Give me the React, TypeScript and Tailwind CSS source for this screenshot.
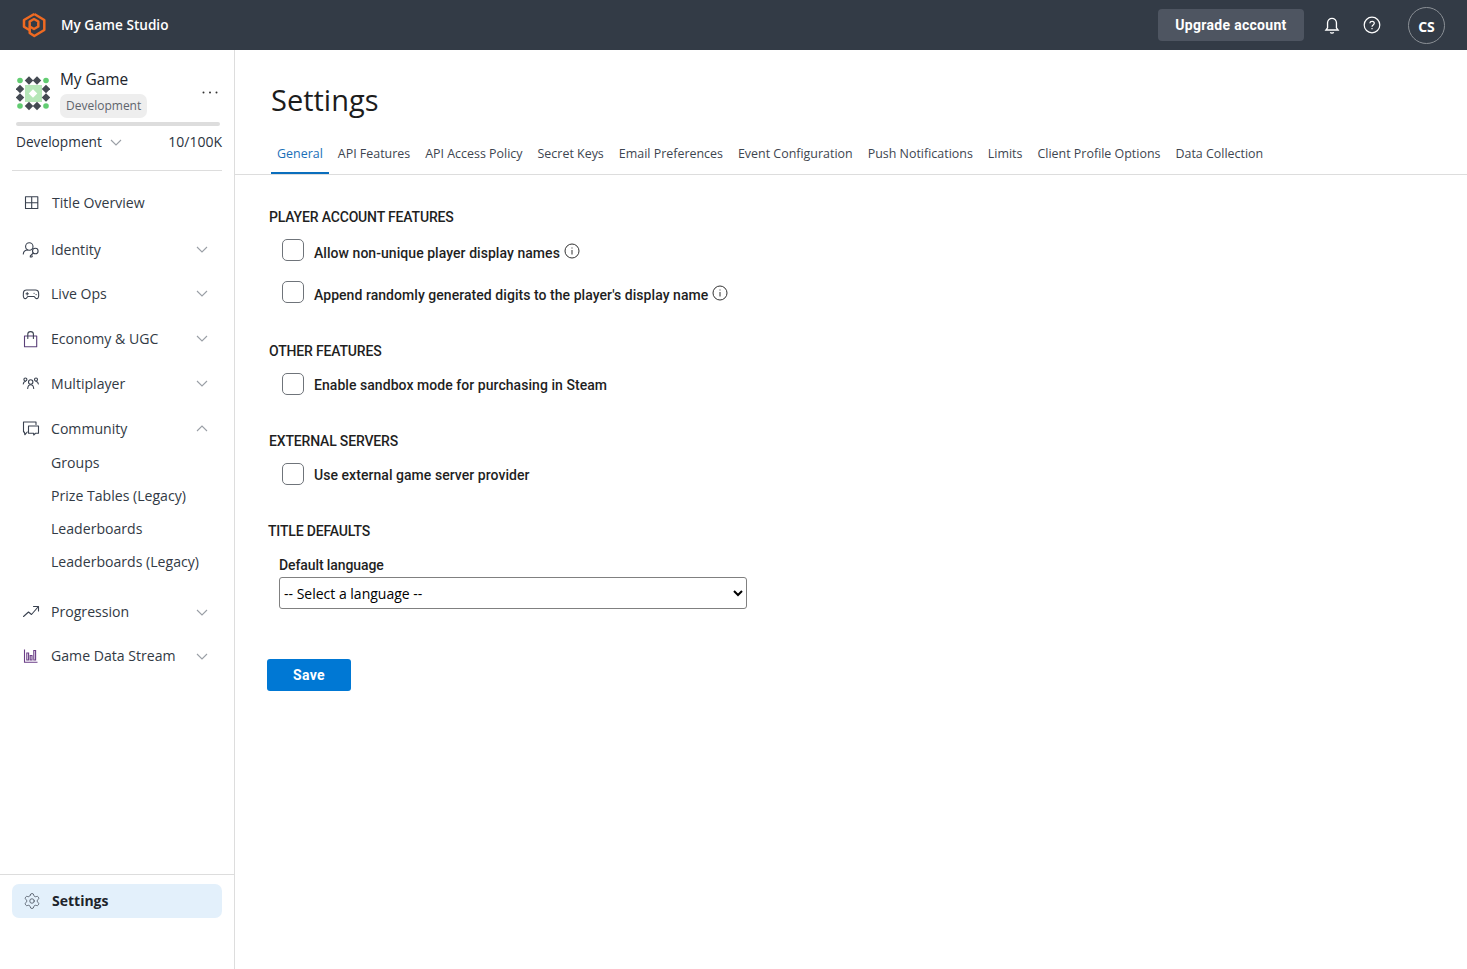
import React from "react";
import { Settings as Gear } from "lucide-react";

const sans = "font-['Open_Sans','Noto_Sans',sans-serif]";
const din = "font-['Roboto','Liberation_Sans',sans-serif]";

function Chevron({ up = false, className = "" }: { up?: boolean; className?: string }) {
  return (
    <svg width="12" height="7" viewBox="0 0 12 7" fill="none" stroke="#9a9fa6" strokeWidth="1.1" className={className}>
      <path d={up ? "M1 6l5-5 5 5" : "M1 1l5 5 5-5"} />
    </svg>
  );
}

function Ic({ children, w = 18 }: { children: React.ReactNode; w?: number }) {
  return (
    <svg width={w} height={w} viewBox="0 0 18 18" fill="none" stroke="#3a4250" strokeWidth="1.1" strokeLinecap="round" strokeLinejoin="round">
      {children}
    </svg>
  );
}

const icons: Record<string, React.ReactNode> = {
  title: (
    <Ic>
      <path d="M3.500 2.800h12.300v11.700H3.500zM9.700 2.800v11.700M3.500 8.700h12.300" />
    </Ic>
  ),
  identity: (
    <Ic>
      <circle cx="7.300" cy="5.500" r="3.700" />
      <path d="M1.300 13c.2-2.500 1.800-3.900 4.400-4" />
      <circle cx="13.300" cy="10" r="2.800" />
      <path d="M11.300 12l-3 3v1h1.500l.6-1" />
    </Ic>
  ),
  live: (
    <Ic>
      <path d="M4.500 5h9c1.800 0 2.900 1.100 3.100 2.800.2 1.800.1 3.900-.4 5-.5 1-1.800 1.100-2.600.3l-1.400-1.600H5.800l-1.400 1.600c-.8.8-2.100.7-2.600-.3-.5-1.100-.6-3.200-.4-5C1.600 6.100 2.700 5 4.500 5z" />
      <path d="M4 8.800h2.400M5.200 7.600V10M12 8.200h.2M14 9.600h.2" />
    </Ic>
  ),
  economy: (
    <Ic>
      <path d="M2.500 6h12.200v10.700H2.500z" stroke="#5a3f78" />
      <path d="M5.800 8.500V4c0-1.500 1-2.400 2.800-2.400s2.800.9 2.800 2.400v4.500" />
    </Ic>
  ),
  multi: (
    <Ic>
      <circle cx="8.700" cy="7" r="2.200" />
      <path d="M5.700 13.500c.2-2.300 1.200-3.800 3-3.800s2.800 1.500 3 3.800" />
      <circle cx="3.400" cy="4.500" r="1.500" />
      <circle cx="14" cy="4.500" r="1.500" />
      <path d="M1.300 9c.2-1.500.8-2.500 2.100-2.500M16.300 9c-.2-1.500-.8-2.500-2.300-2.500" />
    </Ic>
  ),
  community: (
    <Ic>
      <path d="M14 4.500V2H1.500v10H2.500l.3 2.800 2.400-2.800" />
      <path d="M6.500 6h10v7.200h-2.800l-2 1.800v-1.800H6.500z" />
    </Ic>
  ),
  progression: (
    <Ic>
      <path d="M1.500 13.500l5-4.500 3 2.500 6.500-7.500" />
      <path d="M11.500 3.500h5V8" />
    </Ic>
  ),
  data: (
    <svg width="18" height="18" viewBox="0 0 18 18" fill="none" stroke="#6a3d86" strokeWidth="1.100">
      <path d="M2.500 2.500v12.800h13" />
      <path d="M4.800 6h1.800v7h-1.800zM8.200 8.500h1.800v4.500H8.200zM11.800 3.500h1.800v9.500h-1.800z" />
    </svg>
  ),
};

function NavRow({ icon, label, h, up, extra = "" }: { icon: string; label: string; h: string; up?: boolean; extra?: string }) {
  return (
    <div className={`flex items-center pl-[22px] pr-[27px] ${h} ${extra}`}>
      <span className="flex w-[29px] shrink-0">{icons[icon]}</span>
      <span className="flex-1 text-[14.1px] text-[#323a45]">{label}</span>
      <Chevron up={up} className="translate-x-[1px]" />
    </div>
  );
}

function Sub({ children }: { children: React.ReactNode }) {
  return <div className="flex h-[33px] items-center pl-[51px] text-[14.1px] text-[#323a45]">{children}</div>;
}

function GameLogo() {
  const dark = "#444a52";
  const green = "#62cd72";
  const diamond = (x: number, y: number, k: string) => (
    <rect key={k} x={x - 3} y={y - 3} width="6" height="6" fill={dark} transform={`rotate(45 ${x} ${y})`} />
  );
  const xs = [4, 13, 21, 30];
  return (
    <svg width="34" height="36" viewBox="0 0 34 36">
      <rect x="9" y="9" width="17" height="17" fill="#b6e7b8" />
      <rect x="14" y="14.500" width="6" height="6" fill="#fff" transform="rotate(45 17 17.500)" />
      <circle cx={xs[0]} cy="4.500" r="2.800" fill={green} />
      <circle cx={xs[3]} cy="4.500" r="2.800" fill={green} />
      <circle cx={xs[0]} cy="30" r="2.800" fill={green} />
      <circle cx={xs[3]} cy="30" r="2.800" fill={green} />
      {diamond(13, 4.500, "a")}
      {diamond(21, 4.500, "b")}
      {diamond(13, 30, "c")}
      {diamond(21, 30, "d")}
      {diamond(4, 13, "e")}
      {diamond(4, 21.500, "f")}
      {diamond(30, 13, "g")}
      {diamond(30, 21.500, "h")}
    </svg>
  );
}

function Info() {
  return (
    <svg width="16" height="16" viewBox="0 0 16 16" fill="none" stroke="#333" strokeWidth="1" className="ml-1 mt-[2px]">
      <circle cx="8" cy="8" r="7" />
      <path d="M8 7v4.500M8 4.500v1" />
    </svg>
  );
}

function Check({ label, info }: { label: string; info?: boolean }) {
  return (
    <div className="flex h-[22px] items-center pl-[13px]">
      <span className="h-[22px] w-[22px] shrink-0 rounded-[5px] border border-[#6f747a] bg-white" />
      <span className={`ml-[10px] text-[14px] font-medium leading-[16px] tracking-[0.05px] text-[#1f1f1f] ${din} ${info ? "mt-[6px]" : "mt-[2px]"}`}>{label}</span>
      {info && <Info />}
    </div>
  );
}

function Heading({ children, extra }: { children: React.ReactNode; extra: string }) {
  return <h2 className={`text-[14px] font-medium leading-[20px] tracking-[-0.17px] text-[#1f1f1f] ${din} ${extra}`}>{children}</h2>;
}

const tabs = [
  "General",
  "API Features",
  "API Access Policy",
  "Secret Keys",
  "Email Preferences",
  "Event Configuration",
  "Push Notifications",
  "Limits",
  "Client Profile Options",
  "Data Collection",
];

export default function App() {
  return (
    <div className={`flex h-[969px] w-[1467px] flex-col overflow-hidden bg-white ${sans}`}>
      <header className="flex h-[50px] shrink-0 items-center bg-[#333b46] pl-[22px] pr-[22px] text-white">
        <svg width="24" height="26" viewBox="0 0 24 26" fill="none" stroke="#ef6a22" strokeWidth="2.500" strokeLinejoin="round">
          <path d="M12.300 2L22.300 8V18L12.300 24L7.700 21V14.500" />
          <path d="M12.300 2L2 8V14.700L7.300 18" />
          <path d="M12 7L16.300 9.500V14.500L12 17L7.700 14.500V9.500z" />
        </svg>
        <span className="ml-[15px] text-[13.6px] font-semibold">My Game Studio</span>
        <button className={`ml-auto flex h-[32px] w-[146px] items-center justify-center rounded-[4px] bg-[#4e5561] text-[14px] font-bold tracking-[0.3px] text-white ${din}`}>
          Upgrade account
        </button>
        <svg width="20" height="20" viewBox="0 0 18 18" fill="none" stroke="#fff" strokeWidth="1.200" className="ml-[18px]">
          <path d="M3.500 13.500h11l-1.500-2V7a4 4 0 0 0-8 0v4.500zM7.500 15.500c.5 1 2.500 1 3 0" />
        </svg>
        <svg width="18" height="18" viewBox="0 0 18 18" fill="none" stroke="#fff" strokeWidth="1.200" className="ml-[21px]">
          <circle cx="9" cy="9" r="7.800" />
          <path d="M6.800 7.300c.3-2.600 4.500-2.500 4.500 0 0 1.700-2.300 1.700-2.300 3.400M9 12v1.200" />
        </svg>
        <span className="ml-[27px] flex h-[37px] w-[37px] items-center justify-center rounded-full border border-[#8b9096] pt-[2px] text-[14px] font-bold">
          CS
        </span>
      </header>

      <div className="flex min-h-0 flex-1">
        <aside className="flex w-[235px] shrink-0 flex-col border-r border-[#dddddd]">
          <div className="relative h-[72px] pl-[16px] pt-[26px]">
            <div className="flex">
              <GameLogo />
            </div>
            <div className="absolute left-[60px] top-[18px]">
              <div className="text-[15.4px] font-medium leading-[24px] text-[#20242b]">My Game</div>
              <div className="inline-flex h-[24px] items-center rounded-[7px] bg-[#eeeeee] px-[6px] text-[12px] text-[#5e646c]">
                Development
              </div>
            </div>
            <svg width="16" height="3" viewBox="0 0 16 3" fill="#333" className="absolute left-[202px] top-[41px]">
              <circle cx="1.500" cy="1.500" r="1" />
              <circle cx="8" cy="1.500" r="1" />
              <circle cx="14.500" cy="1.500" r="1" />
            </svg>
          </div>
          <div className="ml-[16px] h-[4px] w-[204px] rounded-full bg-[#dddddd]" />
          <div className="ml-[16px] mr-[12px] mt-[7px] flex h-[18px] items-center text-[#2b3340]">
            <span className="text-[13.7px] font-medium">Development</span>
            <Chevron className="ml-[8px]" />
            <span className="ml-auto -mt-[2px] text-[14px]">10/100K</span>
          </div>
          <div className="ml-[12px] mr-[12px] mt-[19px] h-px bg-[#dddddd]" />

          <nav className="mt-[9px]">
            <div className="mb-[2px] flex h-[45px] items-center pl-[22px]">
              <span className="flex w-[30px] shrink-0">{icons.title}</span>
              <span className="text-[14.1px] text-[#323a45]">Title Overview</span>
            </div>
            <NavRow icon="identity" label="Identity" h="h-[45px]" />
            <NavRow icon="live" label="Live Ops" h="h-[43px]" extra="mb-[1px]" />
            <NavRow icon="economy" label="Economy & UGC" h="h-[45px]" />
            <NavRow icon="multi" label="Multiplayer" h="h-[45px]" />
            <NavRow icon="community" label="Community" h="h-[41px]" up extra="pt-[4px] -mb-px" />
            <Sub>Groups</Sub>
            <Sub>Prize Tables (Legacy)</Sub>
            <Sub>Leaderboards</Sub>
            <Sub>Leaderboards (Legacy)</Sub>
            <NavRow icon="progression" label="Progression" h="h-[44px]" extra="mt-[12px]" />
            <NavRow icon="data" label="Game Data Stream" h="h-[44px]" />
          </nav>

          <div className="mt-auto border-t border-[#dddddd] px-[12px] pb-[51px] pt-[9px]">
            <div className="flex h-[34px] items-center rounded-[7px] bg-[#e3f0fb] pb-[1px] pl-[11px]">
              <Gear size={18} strokeWidth={1.1} color="#4a5260" />
              <span className="ml-[11px] text-[14px] font-bold text-[#20242b]">Settings</span>
            </div>
          </div>
        </aside>

        <main className="min-w-0 flex-1">
          <h1 className="pl-[36px] pt-[29px] text-[29px] leading-[42px] text-[#1c1c1c]">Settings</h1>
          <div className="mt-[12px] box-border flex h-[42px] gap-[3px] border-b border-[#dddddd] pl-[36px]">
            {tabs.map((t, i) => (
              <div
                key={t}
                className={`box-border flex h-[41px] items-center border-b-2 px-[6px] pt-[3px] text-[12.45px] ${i === 0 ? "border-[#0a6ebd] text-[#1a6fb8]" : "border-transparent text-[#3e4650]"}`}
              >
                {t}
              </div>
            ))}
          </div>

          <div className="pl-[34px]">
            <Heading extra="mt-[32px]">PLAYER ACCOUNT FEATURES</Heading>
            <div className="mt-[12px] flex flex-col gap-[20px]">
              <Check label="Allow non-unique player display names" info />
              <Check label="Append randomly generated digits to the player's display name" info />
            </div>
            <Heading extra="mt-[38px]">OTHER FEATURES</Heading>
            <div className="mt-[12px]">
              <Check label="Enable sandbox mode for purchasing in Steam" />
            </div>
            <Heading extra="mt-[36px]">EXTERNAL SERVERS</Heading>
            <div className="mt-[12px]">
              <Check label="Use external game server provider" />
            </div>
            <Heading extra="mt-[36px] -ml-px">TITLE DEFAULTS</Heading>
            <div className={`ml-[10px] mt-[14px] text-[14px] font-medium leading-[20px] tracking-[-0.1px] text-[#1f1f1f] ${din}`}>Default language</div>
            <select className="ml-[10px] mt-[2px] block h-[32px] w-[468px] rounded-[3px] border border-[#808080] bg-white px-[0px] text-[14px] text-black">
              <option>-- Select a language --</option>
            </select>
            <button className={`-ml-[2px] mt-[50px] block h-[32px] w-[84px] rounded-[3px] bg-[#0078d4] text-[14px] font-bold tracking-[0.4px] text-white ${din}`}>
              Save
            </button>
          </div>
        </main>
      </div>
    </div>
  );
}
